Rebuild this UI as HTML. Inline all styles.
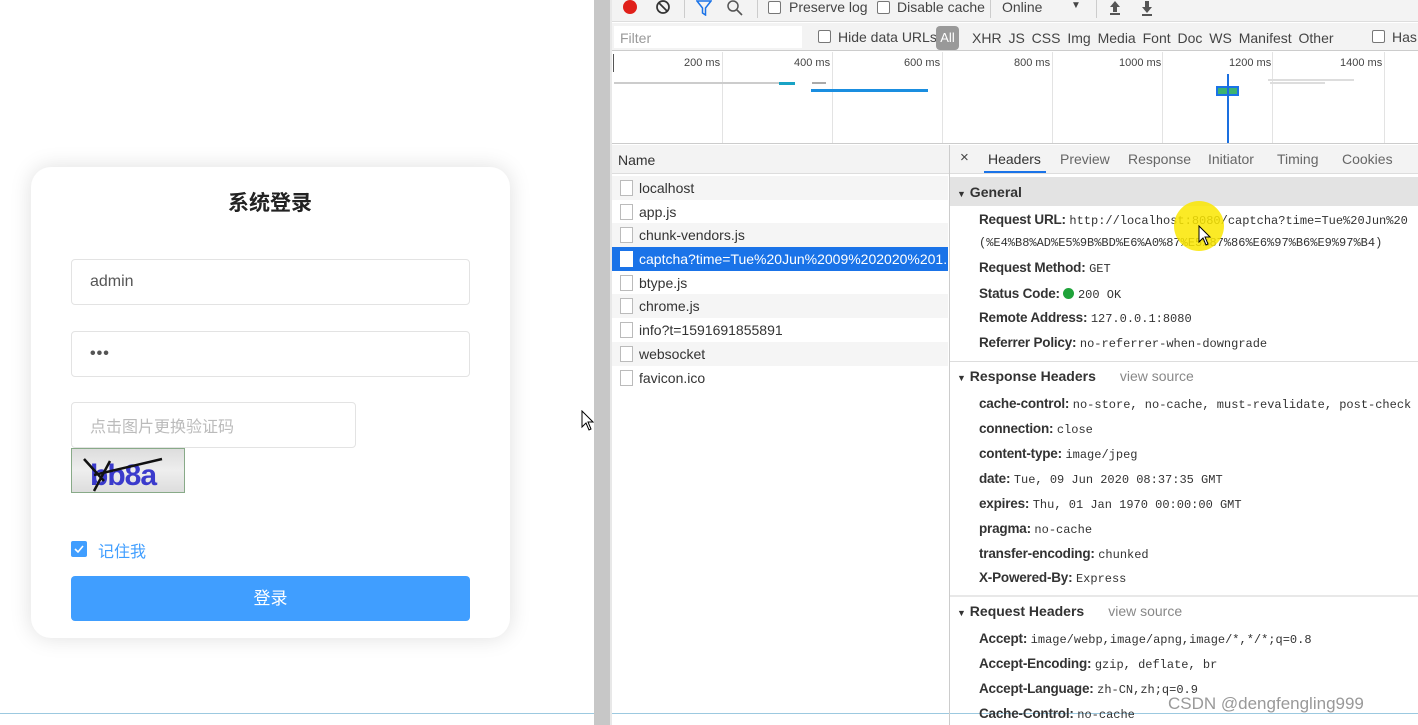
<!DOCTYPE html>
<html><head><meta charset="utf-8"><style>
*{margin:0;padding:0;box-sizing:border-box}
body{width:1418px;height:725px;overflow:hidden;position:relative;background:#fff;font-family:"Liberation Sans","Noto Sans CJK SC",sans-serif;color:#333}
.a{position:absolute;white-space:nowrap}
.card{left:31px;top:167px;width:479px;height:471px;background:#fff;border-radius:20px;box-shadow:0 0 22px rgba(0,0,0,.13)}
.inp{border:1px solid #e3e3e3;border-radius:4px;background:#fff;font-size:16px;color:#555;padding-left:18px;display:flex;align-items:center}
.tb{font-size:14px;color:#444}
.k{font-size:13.5px;font-weight:bold;color:#333;letter-spacing:-0.2px}
.v{font-family:"Liberation Mono",monospace;font-size:12px;color:#333;font-weight:normal;letter-spacing:0}
.row{left:612px;width:336px;height:24px;font-size:14px;color:#333;padding-left:27px;line-height:24px}
.row i{position:absolute;left:8px;top:4px;width:13px;height:16px;border:1px solid #bbb;background:#fff}
.sec{font-size:14px;font-weight:bold;color:#333}
.vs{font-size:14px;color:#888;font-weight:normal;margin-left:24px}
</style></head><body>
<div class="a card"></div>
<div class="a" style="left:0;width:510px;top:187px;text-align:center;font-size:21px;font-weight:bold;color:#222;padding-left:30px">系统登录</div>
<div class="a inp" style="left:71px;top:259px;width:399px;height:46px">admin</div>
<div class="a inp" style="left:71px;top:331px;width:399px;height:46px;font-weight:bold;letter-spacing:1px">•••</div>
<div class="a inp" style="left:71px;top:402px;width:285px;height:46px;color:#bbb">点击图片更换验证码</div>
<div class="a" style="left:71px;top:448px;width:114px;height:45px;border:1px solid #8a8;background:linear-gradient(#ddd,#eee,#ddd);overflow:hidden">
<svg width="114" height="45"><text x="18" y="36" font-family="Liberation Sans,sans-serif" font-size="30" fill="#3a3acc" font-weight="bold" letter-spacing="-1">bb8a</text><path d="M12 10 L32 32 M38 12 L22 42 M22 26 L90 10" stroke="#111" stroke-width="2.5" fill="none"/></svg></div>
<div class="a" style="left:71px;top:541px;width:16px;height:16px;background:#409eff;border-radius:2px"><svg width="16" height="16"><path d="M4 8 L7 11 L12 5" stroke="#fff" stroke-width="1.6" fill="none"/></svg></div>
<div class="a" style="left:98px;top:538px;font-size:16px;color:#409eff">记住我</div>
<div class="a" style="left:71px;top:576px;width:399px;height:45px;background:#409eff;border-radius:4px;color:#fff;font-size:17px;text-align:center;line-height:45px">登录</div>
<svg class="a" style="left:581px;top:410px" width="14" height="22"><path d="M1 1 L1 17 L5 13 L8 20 L10 19 L7 12 L12 12 Z" fill="#fff" stroke="#000"/></svg>
<div class="a" style="left:0;top:713px;width:1418px;height:1px;background:#9cc9e0"></div>

<div class="a" style="left:594px;top:0;width:16px;height:725px;background:#c7c7c7"></div>
<div class="a" style="left:610px;top:0;width:2px;height:725px;background:#e8e8e8"></div>
<div class="a" style="left:612px;top:0;width:806px;height:22px;background:#f3f3f3;border-bottom:1px solid #ddd"></div>
<div class="a" style="left:623px;top:0;width:14px;height:14px;border-radius:50%;background:#e0201a"></div>
<svg class="a" style="left:655px;top:0" width="16" height="16"><circle cx="8" cy="7" r="6" stroke="#333" stroke-width="1.7" fill="none"/><path d="M4 3 L12 11" stroke="#333" stroke-width="1.7"/></svg>
<div class="a" style="left:684px;top:0;width:1px;height:18px;background:#ccc"></div>
<svg class="a" style="left:696px;top:0" width="16" height="16"><path d="M1 1 H15 L9.5 8 V15 L6.5 13 V8 Z" stroke="#1a73e8" stroke-width="1.5" fill="none"/></svg>
<svg class="a" style="left:727px;top:0" width="16" height="16"><circle cx="6" cy="6" r="5" stroke="#555" stroke-width="1.5" fill="none"/><path d="M10 10 L15 15" stroke="#555" stroke-width="1.6"/></svg>
<div class="a" style="left:757px;top:0;width:1px;height:18px;background:#ccc"></div>
<div class="a" style="left:768px;top:1px;width:13px;height:13px;border:1px solid #777;border-radius:2px;background:#fff"></div>
<div class="a tb" style="left:789px;top:-1px">Preserve log</div>
<div class="a" style="left:877px;top:1px;width:13px;height:13px;border:1px solid #777;border-radius:2px;background:#fff"></div>
<div class="a tb" style="left:897px;top:-1px">Disable cache</div>
<div class="a" style="left:990px;top:0;width:1px;height:18px;background:#ccc"></div>
<div class="a tb" style="left:1002px;top:-1px">Online</div>
<div class="a" style="left:1071px;top:0px;font-size:10px;color:#444">▼</div>
<div class="a" style="left:1096px;top:0;width:1px;height:18px;background:#ccc"></div>
<svg class="a" style="left:1108px;top:0" width="14" height="16"><path d="M7 1 L2 7 H5 V12 H9 V7 H12 Z" fill="#555"/><rect x="2" y="13" width="10" height="2" fill="#555"/></svg>
<svg class="a" style="left:1140px;top:0" width="14" height="16"><path d="M7 13 L2 7 H5 V1 H9 V7 H12 Z" fill="#555"/><rect x="2" y="14" width="10" height="2" fill="#555"/></svg>
<div class="a" style="left:612px;top:23px;width:806px;height:28px;background:#f3f3f3;border-bottom:1px solid #ccc"></div>
<div class="a" style="left:614px;top:26px;width:188px;height:22px;background:#fff;font-size:14px;color:#999;padding:4px 6px">Filter</div>
<div class="a" style="left:818px;top:30px;width:13px;height:13px;border:1px solid #777;border-radius:2px;background:#fff"></div>
<div class="a tb" style="left:838px;top:29px">Hide data URLs</div>
<div class="a" style="left:936px;top:26px;width:23px;height:24px;background:#999;border-radius:4px;color:#fff;font-size:13px;text-align:center;line-height:24px">All</div>
<div class="a tb" style="left:972px;top:30px;word-spacing:3px">XHR JS CSS Img Media Font Doc WS Manifest Other</div>
<div class="a" style="left:1372px;top:30px;width:13px;height:13px;border:1px solid #777;border-radius:2px;background:#fff"></div>
<div class="a tb" style="left:1392px;top:29px">Has</div>
<div class="a" style="left:612px;top:52px;width:806px;height:92px;background:#fff;border-bottom:1px solid #ccc"></div>
<div class="a" style="left:613px;top:54px;width:1px;height:18px;background:#555"></div>
<div class="a" style="left:722px;top:52px;width:1px;height:91px;background:#e3e3e3"></div>
<div class="a" style="left:832px;top:52px;width:1px;height:91px;background:#e3e3e3"></div>
<div class="a" style="left:942px;top:52px;width:1px;height:91px;background:#e3e3e3"></div>
<div class="a" style="left:1052px;top:52px;width:1px;height:91px;background:#e3e3e3"></div>
<div class="a" style="left:1162px;top:52px;width:1px;height:91px;background:#e3e3e3"></div>
<div class="a" style="left:1272px;top:52px;width:1px;height:91px;background:#e3e3e3"></div>
<div class="a" style="left:1384px;top:52px;width:1px;height:91px;background:#e3e3e3"></div>
<div class="a" style="left:684px;top:57px;font-size:11px;color:#444">200 ms</div>
<div class="a" style="left:794px;top:57px;font-size:11px;color:#444">400 ms</div>
<div class="a" style="left:904px;top:57px;font-size:11px;color:#444">600 ms</div>
<div class="a" style="left:1014px;top:57px;font-size:11px;color:#444">800 ms</div>
<div class="a" style="left:1119px;top:57px;font-size:11px;color:#444">1000 ms</div>
<div class="a" style="left:1229px;top:57px;font-size:11px;color:#444">1200 ms</div>
<div class="a" style="left:1340px;top:57px;font-size:11px;color:#444">1400 ms</div>
<div class="a" style="left:614px;top:82px;width:165px;height:2px;background:#ccc"></div>
<div class="a" style="left:779px;top:82px;width:16px;height:3px;background:#19a3c5"></div>
<div class="a" style="left:812px;top:82px;width:14px;height:2px;background:#aaa"></div>
<div class="a" style="left:811px;top:89px;width:117px;height:3px;background:#1a8ee0"></div>
<div class="a" style="left:1216px;top:86px;width:23px;height:10px;background:#3cb371;border:2px solid #1a73e8"></div>
<div class="a" style="left:1227px;top:74px;width:2px;height:69px;background:#1a6fe0"></div>
<div class="a" style="left:1268px;top:79px;width:86px;height:2px;background:#ddd"></div>
<div class="a" style="left:1270px;top:82px;width:55px;height:2px;background:#ddd"></div>
<div class="a" style="left:612px;top:145px;width:337px;height:29px;background:#f3f3f3;border-bottom:1px solid #ddd;font-size:14px;color:#333;padding:7px 6px">Name</div>
<div class="a" style="left:949px;top:145px;width:1px;height:580px;background:#ccc"></div>
<div class="a row" style="top:176px;background:#f5f5f5"><i></i>localhost</div>
<div class="a row" style="top:200px"><i></i>app.js</div>
<div class="a row" style="top:223px;background:#f5f5f5"><i></i>chunk-vendors.js</div>
<div class="a row" style="top:247px;background:#1a73e8;color:#fff;overflow:hidden"><i style="border-color:#fff"></i>captcha?time=Tue%20Jun%2009%202020%201...</div>
<div class="a row" style="top:271px"><i></i>btype.js</div>
<div class="a row" style="top:294px;background:#f5f5f5"><i></i>chrome.js</div>
<div class="a row" style="top:318px"><i></i>info?t=1591691855891</div>
<div class="a row" style="top:342px;background:#f5f5f5"><i></i>websocket</div>
<div class="a row" style="top:366px"><i></i>favicon.ico</div>
<div class="a" style="left:950px;top:145px;width:468px;height:29px;background:#f3f3f3;border-bottom:1px solid #ddd"></div>
<div class="a" style="left:960px;top:149px;font-size:15px;color:#444">×</div>
<div class="a tb" style="left:988px;top:151px;color:#333">Headers</div>
<div class="a" style="left:984px;top:171px;width:62px;height:2px;background:#1a73e8"></div>
<div class="a tb" style="left:1060px;top:151px;color:#666">Preview</div>
<div class="a tb" style="left:1128px;top:151px;color:#666">Response</div>
<div class="a tb" style="left:1208px;top:151px;color:#666">Initiator</div>
<div class="a tb" style="left:1277px;top:151px;color:#666">Timing</div>
<div class="a tb" style="left:1342px;top:151px;color:#666">Cookies</div>
<div class="a" style="left:950px;top:177px;width:468px;height:29px;background:#e3e3e3"></div>
<div class="a sec" style="left:957px;top:184px"><span style="font-size:9px">▼</span> General</div>
<div class="a k" style="left:979px;top:212px">Request URL: <span class="v">http://localhost:8080/captcha?time=Tue%20Jun%20</span></div>
<div class="a v" style="left:979px;top:236px">(%E4%B8%AD%E5%9B%BD%E6%A0%87%E5%87%86%E6%97%B6%E9%97%B4)</div>
<div class="a" style="left:1174px;top:201px;width:50px;height:50px;border-radius:50%;background:rgba(250,230,0,.85)"></div>
<svg class="a" style="left:1198px;top:225px" width="14" height="22"><path d="M1 1 L1 17 L5 13 L8 20 L10 19 L7 12 L12 12 Z" fill="#fff" stroke="#000"/></svg>
<div class="a k" style="left:979px;top:260px">Request Method: <span class="v">GET</span></div>
<div class="a k" style="left:979px;top:286px">Status Code: <span style="display:inline-block;width:11px;height:11px;border-radius:50%;background:#1fa33a;vertical-align:-1px"></span> <span class="v">200 OK</span></div>
<div class="a k" style="left:979px;top:310px">Remote Address: <span class="v">127.0.0.1:8080</span></div>
<div class="a k" style="left:979px;top:335px">Referrer Policy: <span class="v">no-referrer-when-downgrade</span></div>
<div class="a" style="left:950px;top:361px;width:468px;height:1px;background:#ddd"></div>
<div class="a sec" style="left:957px;top:368px"><span style="font-size:9px">▼</span> Response Headers<span class="vs">view source</span></div>
<div class="a k" style="left:979px;top:396px">cache-control: <span class="v">no-store, no-cache, must-revalidate, post-check</span></div>
<div class="a k" style="left:979px;top:421px">connection: <span class="v">close</span></div>
<div class="a k" style="left:979px;top:446px">content-type: <span class="v">image/jpeg</span></div>
<div class="a k" style="left:979px;top:471px">date: <span class="v">Tue, 09 Jun 2020 08:37:35 GMT</span></div>
<div class="a k" style="left:979px;top:496px">expires: <span class="v">Thu, 01 Jan 1970 00:00:00 GMT</span></div>
<div class="a k" style="left:979px;top:521px">pragma: <span class="v">no-cache</span></div>
<div class="a k" style="left:979px;top:546px">transfer-encoding: <span class="v">chunked</span></div>
<div class="a k" style="left:979px;top:570px">X-Powered-By: <span class="v">Express</span></div>
<div class="a" style="left:950px;top:595px;width:468px;height:2px;background:#e8e8e8"></div>
<div class="a sec" style="left:957px;top:603px"><span style="font-size:9px">▼</span> Request Headers<span class="vs">view source</span></div>
<div class="a k" style="left:979px;top:631px">Accept: <span class="v">image/webp,image/apng,image/*,*/*;q=0.8</span></div>
<div class="a k" style="left:979px;top:656px">Accept-Encoding: <span class="v">gzip, deflate, br</span></div>
<div class="a k" style="left:979px;top:681px">Accept-Language: <span class="v">zh-CN,zh;q=0.9</span></div>
<div class="a k" style="left:979px;top:706px">Cache-Control: <span class="v">no-cache</span></div>
<div class="a" style="left:1168px;top:694px;font-size:17px;color:#999">CSDN @dengfengling999</div>
</body></html>
